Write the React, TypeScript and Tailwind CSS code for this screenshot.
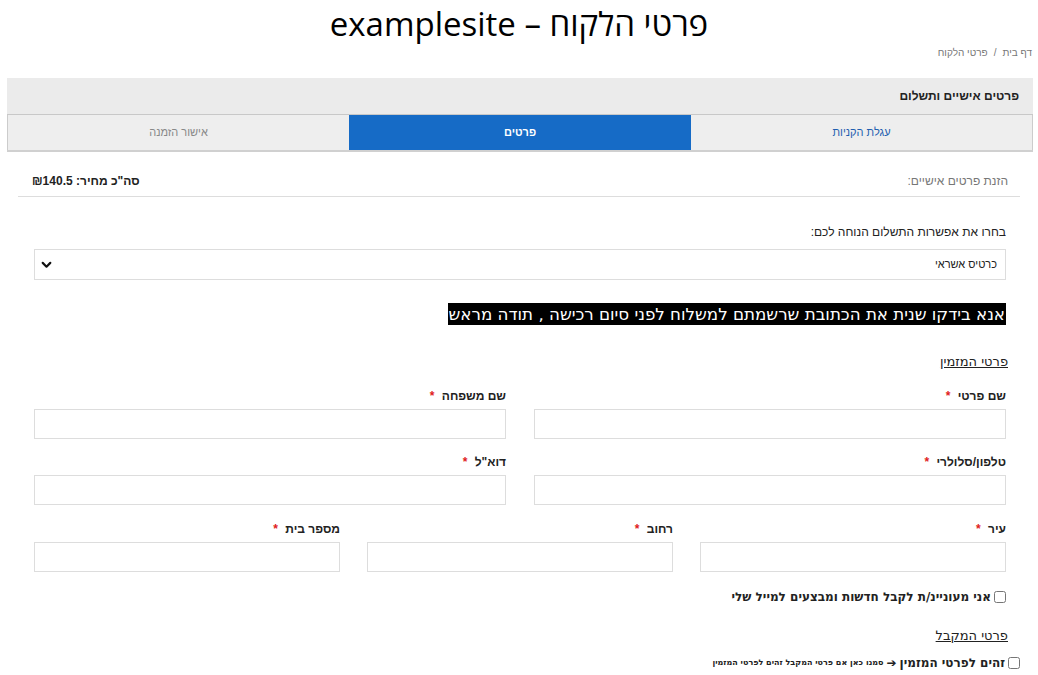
import * as React from 'react';

const Req = () => <span className="text-[#e02020] mr-1">*</span>;

const Field = ({ label }: { label: string }) => (
  <div className="flex flex-col">
    <label className="text-[12px] font-bold text-[#222] h-[14px] leading-[14px] mb-[6px]">
      {label} <Req />
    </label>
    <input className="h-[30px] border border-[#ddd] bg-white outline-none px-2" />
  </div>
);

const App: React.FC = () => {
  return (
    <div dir="rtl" className="bg-white w-[1038px] min-h-[675px] text-[#222]" style={{ fontFamily: '"Liberation Sans", Arial, sans-serif' }}>
      <h1 className="text-center text-[33px] leading-none pt-[7px] h-[42px] text-black" style={{ fontFamily: '"Open Sans", "Noto Sans", sans-serif' }}>
        פרטי הלקוח – examplesite
      </h1>
      <div className="flex gap-[6px] px-[6px] text-[10px] text-[#777] h-[36px] items-start pt-[3px]">
        <span>דף בית</span>
        <span>/</span>
        <span>פרטי הלקוח</span>
      </div>

      {/* panel */}
      <div className="ml-[7px] mr-[5px]">
        <div className="bg-[#ebebeb] h-[37px] border-b border-[#c8c8c8] flex items-center px-[14px] text-[12px] font-bold">
          פרטים אישיים ותשלום
        </div>
        <div className="grid grid-cols-3 h-[37px] text-[11px] border-b-2 border-[#d0d0d0]">
          <div className="bg-[#eeeeee] flex items-center justify-center text-[#1f5fb0] border-r border-[#ccc]">עגלת הקניות</div>
          <div className="bg-[#166bc6] flex items-center justify-center text-white font-bold">פרטים</div>
          <div className="bg-[#eeeeee] flex items-center justify-center text-[#888] border-l border-[#ccc]">אישור הזמנה</div>
        </div>
      </div>

      <div className="mx-[18px] mt-[20px] flex justify-between items-center pr-[12px] pl-[14px] pb-[6px] border-b border-[#ddd] text-[12px]">
        <span className="text-[#777]">הזנת פרטים אישיים:</span>
        <span className="font-bold">סה"כ מחיר: ₪140.5</span>
      </div>

      <div className="pl-[34px] pr-[32px]">
        <div className="text-[12px] mt-[26px] mb-[8px]">בחרו את אפשרות התשלום הנוחה לכם:</div>
        <div className="h-[31px] border border-[#ddd] flex items-center justify-between pr-[8px] pl-[5px] text-[11px]">
          <span>כרטיס אשראי</span>
          <svg width="13" height="13" viewBox="0 0 24 24" fill="none" stroke="#111" strokeWidth="4" strokeLinecap="round" strokeLinejoin="round">
            <path d="M5 9l7 7 7-7" />
          </svg>
        </div>

        <div className="mt-[23px] flex">
          <span className="bg-black text-white leading-[22px] px-[1px]" style={{ fontFamily: '"DejaVu Sans", sans-serif', fontSize: '16.7px' }}>
            אנא בידקו שנית את הכתובת שרשמתם למשלוח לפני סיום רכישה , תודה מראש
          </span>
        </div>

        <div className="mt-[27px] -mr-[2px] underline" style={{ fontFamily: '"DejaVu Sans", sans-serif', fontSize: '13px' }}>פרטי המזמין</div>

        <div className="grid grid-cols-2 gap-x-[28px] gap-y-[16px] mt-[17px]">
          <Field label="שם פרטי" />
          <Field label="שם משפחה" />
          <Field label="טלפון/סלולרי" />
          <Field label={'דוא"ל'} />
        </div>
        <div className="grid grid-cols-3 gap-x-[27px] mt-[17px]">
          <Field label="עיר" />
          <Field label="רחוב" />
          <Field label="מספר בית" />
        </div>

        <label className="flex items-center gap-[3px] mt-[16px] text-[12px] font-bold" style={{ fontFamily: '"DejaVu Sans", sans-serif' }}>
          <input type="checkbox" className="w-[12px] h-[12px] m-0" />
          <span>אני מעוניינ/ת לקבל חדשות ומבצעים למייל שלי</span>
        </label>

        <div className="mt-[20px] -mr-[2px] underline" style={{ fontFamily: '"DejaVu Sans", sans-serif', fontSize: '13px' }}>פרטי המקבל</div>

        <label className="flex items-center gap-[3px] mt-[9px] -mr-[14px] font-bold" style={{ fontFamily: '"DejaVu Sans", sans-serif' }}>
          <input type="checkbox" className="w-[12px] h-[12px] m-0" />
          <span className="text-[12px]">זהים לפרטי המזמין</span>
          <span className="text-[12px]">➔</span>
          <span className="text-[8px]">סמנו כאן אם פרטי המקבל זהים לפרטי המזמין</span>
        </label>
      </div>
    </div>
  );
};

export default App;
